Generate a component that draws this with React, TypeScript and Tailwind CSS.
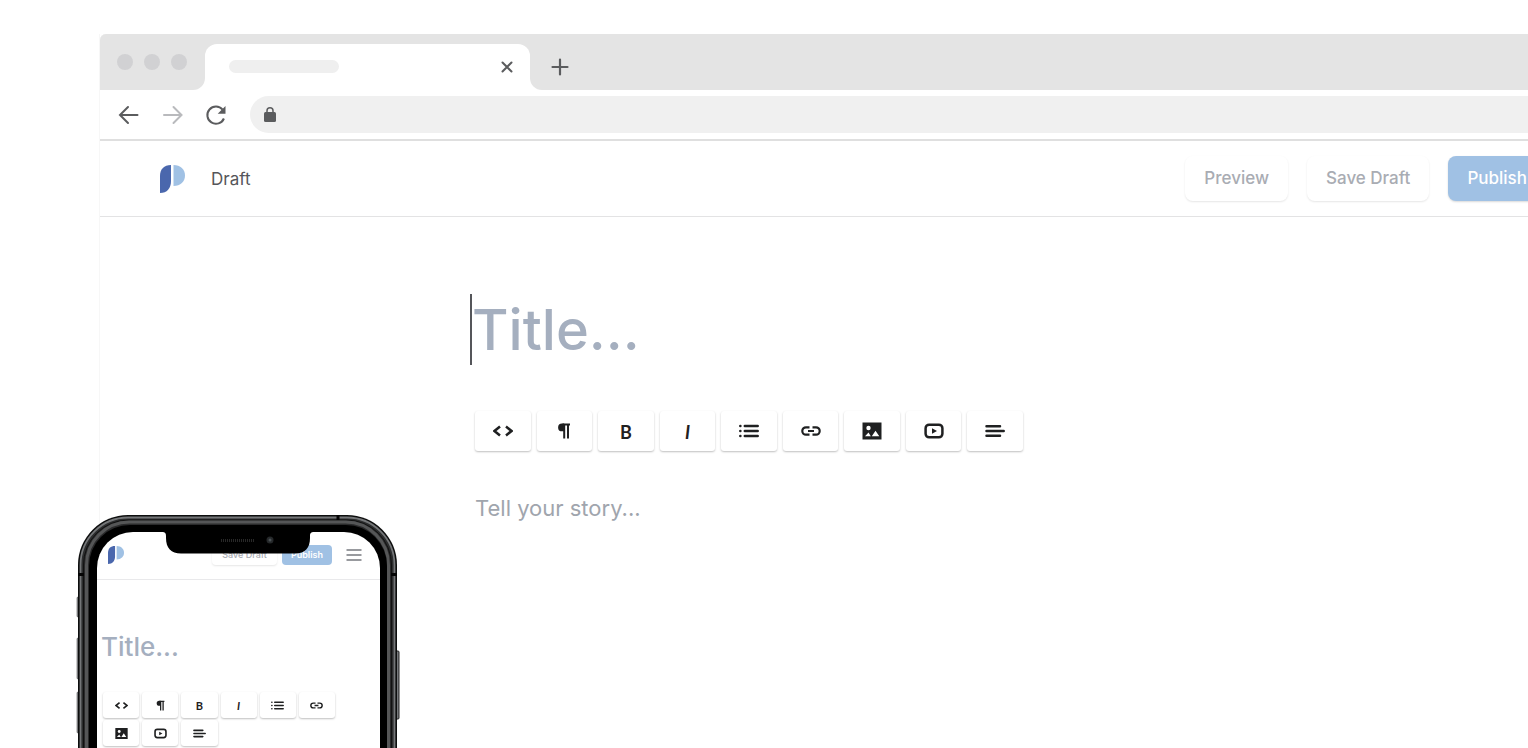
import type { ReactNode } from 'react';
import clsx from 'clsx';

const Logo = ({ className }: { className: string }) => (
  <svg viewBox="0 0 25 28" className={className} aria-hidden="true">
    <path d="M0 11C0 4 4 0 11 0V16C11 23.500 7 28 0 28Z" fill="#4a67ad" />
    <path d="M13.500 0C20.500 0 25 4.500 25 10.500S20.500 21 13.500 21Z" fill="#a0c1e4" />
  </svg>
);

const stroke = {
  fill: 'none',
  stroke: 'currentColor',
  strokeWidth: 2.5,
  strokeLinecap: 'round',
} as const;

const tools: { label: string; glyph?: string; icon?: ReactNode }[] = [
  {
    label: 'Code',
    icon: (
      <path d="M7 5.500 1.500 10 7 14.500M13 5.500 18.500 10 13 14.500" {...stroke} strokeLinecap="butt" />
    ),
  },
  {
    label: 'Paragraph',
    icon: (
      <>
        <path d="M16 3.500H8.500M10.200 3V17.500M14 3V17.500" {...stroke} strokeWidth={2} strokeLinecap="butt" />
        <path d="M10.200 2.500H8A3.900 3.900 0 0 0 8 10.300H10.200Z" fill="currentColor" />
      </>
    ),
  },
  { label: 'Bold', glyph: 'B' },
  { label: 'Italic', glyph: 'I' },
  {
    label: 'List',
    icon: (
      <path d="M1.300 5H1.400M1.300 10H1.400M1.300 15H1.400M5.800 5H18.700M5.800 10H18.700M5.800 15H18.700" {...stroke} />
    ),
  },
  {
    label: 'Link',
    icon: (
      <path
        d="M8.500 6.300H5A3.700 3.700 0 0 0 5 13.700H8.500M11.500 6.300H15A3.700 3.700 0 0 1 15 13.700H11.500M7 10H13"
        {...stroke}
        strokeWidth={2.2}
        strokeLinecap="butt"
      />
    ),
  },
  {
    label: 'Image',
    icon: (
      <>
        <path d="M.500 1.500H19.500V18.500H.500Z" fill="currentColor" />
        <circle cx="6.500" cy="7" r="2.200" fill="#fff" />
        <path d="M3 15.300 6.500 11.500 8.800 15.300ZM9.800 15.300 13.500 9.800 17.300 15.300Z" fill="#fff" />
      </>
    ),
  },
  {
    label: 'Video',
    icon: (
      <>
        <rect x="1.600" y="3.700" width="16.800" height="12.600" rx="3.500" {...stroke} />
        <path d="M8 7.200 13 10 8 12.800Z" fill="currentColor" />
      </>
    ),
  },
  {
    label: 'Align',
    icon: <path d="M1.500 5.200H15M1.500 10H18.700M1.500 14.800H15" {...stroke} />,
  },
];

const Toolbar = ({ compact = false }: { compact?: boolean }) => (
  <div
    className={clsx(
      'grid text-[#1f2021]',
      compact ? 'w-[232px] grid-cols-6 gap-x-[3px] gap-y-[2px]' : 'w-[548px] grid-cols-9 gap-[6px]',
    )}
  >
    {tools.map(({ label, glyph, icon }) => (
      <button
        key={label}
        type="button"
        aria-label={label}
        className={clsx(
          'flex items-center justify-center rounded-[3px] bg-white shadow-[0_1px_2px_rgba(0,0,0,0.25)]',
          compact ? 'h-[26px]' : 'h-10',
        )}
      >
        {glyph ? (
          <span
            className={clsx(
              "font-['Lato',sans-serif] leading-none font-bold",
              label === 'Italic' && 'italic',
              compact ? 'text-[11px]' : 'pt-0.5 text-[18px]',
            )}
          >
            {glyph}
          </span>
        ) : (
          <svg viewBox="0 0 20 20" className={compact ? 'size-[13px]' : 'size-5'} aria-hidden="true">
            {icon}
          </svg>
        )}
      </button>
    ))}
  </div>
);

const BrowserChrome = () => (
  <div>
    <div className="flex h-14 overflow-hidden rounded-tl-md bg-[#e4e4e4]">
      <div className="w-[105px] bg-white">
        <div className="flex h-full gap-[11px] rounded-br-xl bg-[#e4e4e4] pt-5 pl-[17px]">
          <span className="size-4 rounded-full bg-[#d1d1d3]" />
          <span className="size-4 rounded-full bg-[#d1d1d3]" />
          <span className="size-4 rounded-full bg-[#d1d1d3]" />
        </div>
      </div>
      <div className="w-[325px] pt-[10px]">
        <div className="flex h-full justify-between rounded-t-xl bg-white pt-4 pr-4 pl-6">
          <span className="h-[13px] w-[110px] rounded-full bg-[#efefef]" />
          <button type="button" aria-label="Close tab" className="size-[14px] text-[#5b5c5e]">
            <svg viewBox="0 0 14 14" className="size-[14px]" aria-hidden="true">
              <path d="M2.500 2.500 11.500 11.500M11.500 2.500 2.500 11.500" {...stroke} strokeWidth={2} />
            </svg>
          </button>
        </div>
      </div>
      <div className="flex-1 bg-white">
        <div className="flex h-full items-center rounded-bl-xl bg-[#e4e4e4] pt-[10px] pl-[21px]">
          <button type="button" aria-label="New tab" className="text-[#5b5c5e]">
            <svg viewBox="0 0 18 18" className="size-[18px]" aria-hidden="true">
              <path d="M9 1.500V16.500M1.500 9H16.500" {...stroke} strokeWidth={2.2} />
            </svg>
          </button>
        </div>
      </div>
    </div>
    <div className="flex h-[51px] items-center border-b-2 border-[#dfdfdf] pl-[18px] text-[#5b5c5e]">
      <button type="button" aria-label="Back">
        <svg viewBox="0 0 22 22" className="size-[22px]" aria-hidden="true">
          <path d="M19.500 11H2M10 3 2 11 10 19" {...stroke} strokeWidth={2} />
        </svg>
      </button>
      <button type="button" aria-label="Forward" className="ml-[22px] text-[#b9babd]">
        <svg viewBox="0 0 22 22" className="size-[22px]" aria-hidden="true">
          <path d="M2 11H19.500M11.500 3 19.500 11 11.500 19" {...stroke} strokeWidth={2} />
        </svg>
      </button>
      <button type="button" aria-label="Reload" className="ml-[21px]">
        <svg viewBox="0 0 22 22" className="size-[22px]" aria-hidden="true">
          <path d="M18.900 14.500A8.600 8.600 0 1 1 17.600 5.700" {...stroke} strokeWidth={2} strokeLinecap="butt" />
          <path d="M20.500 2V9.800H12.700Z" fill="currentColor" />
        </svg>
      </button>
      <div className="ml-[23px] flex h-[37px] flex-1 items-center rounded-l-full bg-[#f0f0f0] pl-[14px]">
        <svg viewBox="0 0 12 15" className="h-[15px] w-3" aria-hidden="true">
          <path d="M3 6V3.800A3 3 0 0 1 9 3.800V6" {...stroke} strokeWidth={1.5} />
          <rect x="0" y="5" width="12" height="10" rx="1.500" fill="currentColor" />
        </svg>
      </div>
    </div>
  </div>
);

const Browser = () => (
  <div className="-mr-[78px] ml-[99px] min-h-screen border-l border-[#f7f7f7]">
    <BrowserChrome />
    <header className="flex h-[76px] items-center justify-between border-b border-[#e3e3e4] px-[60px]">
      <div className="flex items-center gap-[26px]">
        <Logo className="h-7 w-[25px]" />
        <span className="pt-0.5 text-[17px] text-[#55565a]">Draft</span>
      </div>
      <div className="flex h-[45px] gap-[19px] text-[17px] font-medium">
        <button type="button" className="rounded-lg px-[19px] text-[#a9acb3] shadow-[0_1px_2px_rgba(0,0,0,0.1)]">
          Preview
        </button>
        <button type="button" className="rounded-lg px-[19px] text-[#a9acb3] shadow-[0_1px_2px_rgba(0,0,0,0.1)]">
          Save Draft
        </button>
        <button type="button" className="rounded-lg bg-[#a0c1e4] px-[19px] text-white shadow-[0_1px_2px_rgba(0,0,0,0.15)]">
          Publish
        </button>
      </div>
    </header>
    <main className="mx-auto max-w-[766px] pt-[77px]">
      <div className="flex">
        <span className="h-[71px] w-0.5 bg-[#55565a]" />
        <input
          aria-label="Title"
          placeholder="Title..."
          className="h-[71px] min-w-0 flex-1 text-[56px] font-medium outline-none placeholder:text-[#a5afbf]"
        />
      </div>
      <div className="px-[5px] pt-[46px]">
        <Toolbar />
        <textarea
          aria-label="Story"
          placeholder="Tell your story..."
          className="mt-[41px] h-24 w-full resize-none text-[22px] leading-8 outline-none placeholder:text-[#a0a5ad]"
        />
      </div>
    </main>
  </div>
);

const PhoneFrame = () => (
  <svg viewBox="0 0 324 660" className="h-[660px] w-[324px]" aria-hidden="true">
    <rect x="1" y="82" width="4" height="20" rx="1" fill="#8d8f92" stroke="#333" strokeWidth=".500" />
    <rect x="1" y="123" width="4" height="41" rx="1" fill="#8d8f92" stroke="#333" strokeWidth=".500" />
    <rect x="1" y="177" width="4" height="41" rx="1" fill="#8d8f92" stroke="#333" strokeWidth=".500" />
    <rect x="318" y="136" width="5" height="68" rx="1" fill="#77797c" stroke="#222" />
    <rect x="2" y="0" width="319" height="658" rx="50" fill="#0d0e0e" />
    <rect x="4.500" y="2.500" width="314" height="653" rx="47.500" fill="#2c2d2e" stroke="#747678" strokeWidth="1.800" />
    <rect x="7.500" y="5" width="308" height="648" rx="45" fill="#2a2a2b" stroke="#111" />
    <rect x="10.500" y="7" width="302" height="644" rx="43" fill="none" stroke="#555657" strokeWidth="3" />
    <rect x="13" y="10" width="298" height="638" rx="41" fill="#000" />
    <path d="M262 0V5M2 59.500H8M315 59.500H321" stroke="#050505" strokeWidth="3" />
  </svg>
);

const Notch = () => (
  <svg viewBox="0 0 152 22" className="h-[22px] w-[152px]" aria-hidden="true">
    <path d="M0 0C3 0 4 1 4 4V6C4 16 9 21.500 19 21.500H133C143 21.500 148 16 148 6V4C148 1 149 0 152 0Z" fill="#000" />
    <path d="M59 8.500H93" stroke="#282828" strokeWidth="3" strokeDasharray="1 1" />
    <circle cx="108" cy="8" r="3.500" fill="#25282a" />
    <circle cx="108" cy="8" r="1.500" fill="#4c5256" />
  </svg>
);

const Phone = () => (
  <div className="absolute top-[515px] left-[76px]">
    <PhoneFrame />
    <div className="absolute top-[17px] left-[21px] h-[624px] w-[283px] overflow-hidden rounded-[36px] bg-white">
      <header className="flex h-12 items-center border-b border-[#e9e9eb] pr-[18px] pb-0.5 pl-[11px]">
        <Logo className="h-[18px] w-4" />
        <div className="ml-auto flex h-5 text-[9px] font-medium">
          <button type="button" className="rounded px-[10px] text-[#a9acb3] shadow-[0_1px_2px_rgba(0,0,0,0.1)]">
            Save Draft
          </button>
          <button type="button" className="ml-[5px] rounded bg-[#a0c1e4] px-[9px] font-semibold text-white">
            Publish
          </button>
          <button type="button" aria-label="Menu" className="ml-[14px] text-[#77797f]">
            <svg viewBox="0 0 16 14" className="h-[14px] w-4" aria-hidden="true">
              <path d="M.500 2H15.500M.500 7H15.500M.500 12H15.500" stroke="currentColor" strokeWidth="1.300" />
            </svg>
          </button>
        </div>
      </header>
      <div className="pt-[46px] pl-1">
        <input
          aria-label="Mobile title"
          placeholder="Title..."
          className="h-10 w-full text-[26px] font-medium outline-none placeholder:text-[#a5afbf]"
        />
        <div className="pt-[26px] pl-0.5">
          <Toolbar compact />
        </div>
      </div>
      <div className="absolute top-0 left-[65px]">
        <Notch />
      </div>
    </div>
  </div>
);

const App = () => {
  return (
    <div className="relative h-screen overflow-hidden bg-white pt-[34px] font-['Inter',sans-serif]">
      <Browser />
      <Phone />
    </div>
  );
};

export default App;
